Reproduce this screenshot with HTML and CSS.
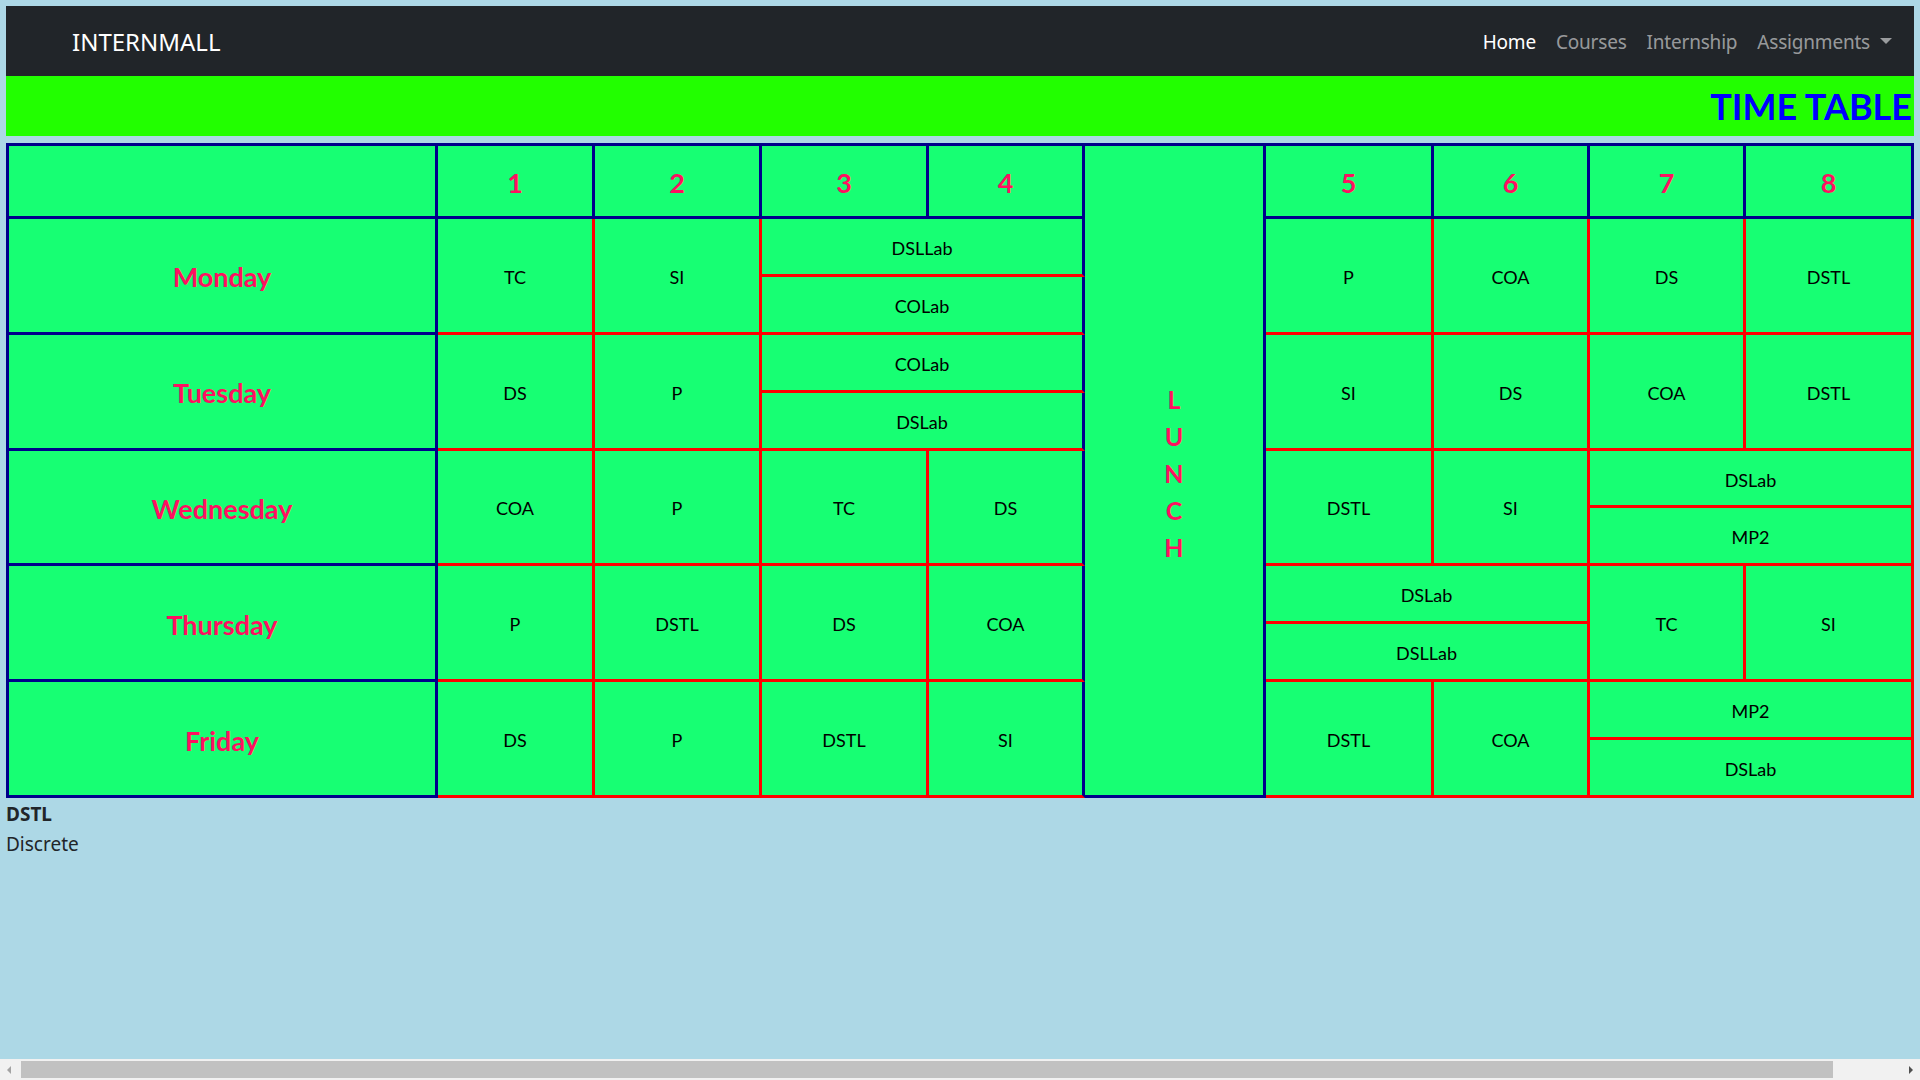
FILE: index.html
```html
<!DOCTYPE html>
<html lang="en">
<head>
<meta charset="utf-8">
<title>INTERNMALL - Time Table</title>
<link rel="stylesheet" href="styles.css">
</head>
<body>
<div class="page">
  <nav class="navbar">
    <a class="brand" href="#">INTERNMALL</a>
    <ul class="nav-links">
      <li><a class="nav-link active" href="#">Home</a></li>
      <li><a class="nav-link" href="#">Courses</a></li>
      <li><a class="nav-link" href="#">Internship</a></li>
      <li><a class="nav-link dropdown" href="#">Assignments<span class="caret"></span></a></li>
    </ul>
  </nav>

  <header class="title-bar">
    <h2 class="title">TIME TABLE</h2>
  </header>

  <div class="timetable">
    <!-- header row -->
    <div class="cell head"></div>
    <div class="cell head num">1</div>
    <div class="cell head num">2</div>
    <div class="cell head num">3</div>
    <div class="cell head num">4</div>
    <div class="cell lunch">L<br>U<br>N<br>C<br>H</div>
    <div class="cell head num">5</div>
    <div class="cell head num">6</div>
    <div class="cell head num">7</div>
    <div class="cell head num">8</div>

    <!-- Monday -->
    <div class="cell day tall">Monday</div>
    <div class="cell tall">TC</div>
    <div class="cell tall">SI</div>
    <div class="cell wide pre-lunch">DSLLab</div>
    <div class="cell tall">P</div>
    <div class="cell tall">COA</div>
    <div class="cell tall">DS</div>
    <div class="cell tall">DSTL</div>
    <div class="cell wide pre-lunch">COLab</div>

    <!-- Tuesday -->
    <div class="cell day tall">Tuesday</div>
    <div class="cell tall">DS</div>
    <div class="cell tall">P</div>
    <div class="cell wide pre-lunch">COLab</div>
    <div class="cell tall">SI</div>
    <div class="cell tall">DS</div>
    <div class="cell tall">COA</div>
    <div class="cell tall">DSTL</div>
    <div class="cell wide pre-lunch">DSLab</div>

    <!-- Wednesday -->
    <div class="cell day tall">Wednesday</div>
    <div class="cell tall">COA</div>
    <div class="cell tall">P</div>
    <div class="cell tall">TC</div>
    <div class="cell tall pre-lunch">DS</div>
    <div class="cell tall">DSTL</div>
    <div class="cell tall">SI</div>
    <div class="cell wide">DSLab</div>
    <div class="cell wide">MP2</div>

    <!-- Thursday -->
    <div class="cell day tall">Thursday</div>
    <div class="cell tall">P</div>
    <div class="cell tall">DSTL</div>
    <div class="cell tall">DS</div>
    <div class="cell tall pre-lunch">COA</div>
    <div class="cell wide">DSLab</div>
    <div class="cell tall">TC</div>
    <div class="cell tall">SI</div>
    <div class="cell wide">DSLLab</div>

    <!-- Friday -->
    <div class="cell day tall">Friday</div>
    <div class="cell tall">DS</div>
    <div class="cell tall">P</div>
    <div class="cell tall">DSTL</div>
    <div class="cell tall pre-lunch">SI</div>
    <div class="cell tall">DSTL</div>
    <div class="cell tall">COA</div>
    <div class="cell wide">MP2</div>
    <div class="cell wide">DSLab</div>
  </div>

  <div class="info">
    <p class="info-title">DSTL</p>
    <p class="info-text">Discrete</p>
  </div>
</div>

<div class="hscroll" aria-hidden="true">
  <span class="hscroll-arrow left"></span>
  <div class="hscroll-track"><div class="hscroll-thumb"></div></div>
  <span class="hscroll-arrow right"></span>
</div>
</body>
</html>
```

FILE: styles.css
```css
html, body {
  margin: 0;
  padding: 0;
}

body {
  background: #add8e6;
  font-family: "Noto Sans", "Open Sans", sans-serif;
  color: #212529;
}

.page {
  padding: 6px 6px 0 6px;
}

/* ---------- navbar ---------- */
.navbar {
  height: 70px;
  background: #212529;
  display: flex;
  align-items: center;
  padding: 0 12px 0 66px;
}

.brand {
  color: #fff;
  text-decoration: none;
  font-size: 24px;
  line-height: 1;
  margin-top: 2px;
}

.nav-links {
  list-style: none;
  margin: 0 0 0 auto;
  padding: 0;
  display: flex;
  align-items: center;
  margin-top: 2px;
}

.nav-link {
  display: flex;
  align-items: center;
  padding: 0 10px;
  font-size: 19px;
  letter-spacing: -0.2px;
  line-height: 30px;
  color: rgba(255, 255, 255, 0.55);
  text-decoration: none;
}

.nav-link.active {
  color: #fff;
}

.caret {
  display: inline-block;
  margin-left: 10px;
  margin-top: -3px;
  width: 0;
  height: 0;
  border-top: 6px solid rgba(255, 255, 255, 0.55);
  border-left: 6px solid transparent;
  border-right: 6px solid transparent;
}

/* ---------- title bar ---------- */
.title-bar {
  height: 60px;
  background: #22ff00;
  display: flex;
  align-items: center;
  justify-content: flex-end;
  padding-right: 2px;
}

.title {
  margin: 0;
  font-family: "Lato", "Noto Sans", sans-serif;
  font-weight: 700;
  font-size: 36px;
  line-height: 1;
  color: #0000ff;
}

/* ---------- timetable ---------- */
.timetable {
  margin-top: 7px;
  display: grid;
  grid-template-columns: 429px 157px 167px 167px 156px 181px 168px 156px 156px 168px;
  grid-template-rows: 73px repeat(10, 57.9px);
  background: #17ff73;
  border-top: 3px solid #00008b;
  border-left: 3px solid #00008b;
  font-family: "Lato", "Noto Sans", sans-serif;
}

.cell {
  display: flex;
  align-items: center;
  justify-content: center;
  text-align: center;
  font-size: 18px;
  color: #000;
  padding-top: 3px;
  border-right: 3px solid #ff0000;
  border-bottom: 3px solid #ff0000;
}

.tall {
  grid-row: span 2;
}

.wide {
  grid-column: span 2;
}

.head {
  border-color: #00008b;
}

.num,
.day,
.lunch {
  font-weight: 700;
  font-size: 27px;
  color: #ff1060;
}

.day {
  border-color: #00008b;
}

.pre-lunch {
  border-right-color: #00008b;
}

.lunch {
  grid-column: 6;
  grid-row: 1 / -1;
  border-color: #00008b;
  line-height: 37px;
  font-size: 25px;
  padding-top: 7px;
}

/* ---------- info ---------- */
.info {
  font-size: 19px;
  line-height: 30px;
  padding-top: 1px;
}

.info p {
  margin: 0;
}

.info-title {
  font-weight: 700;
}

/* ---------- horizontal scrollbar (window chrome) ---------- */
.hscroll {
  position: fixed;
  left: 0;
  right: 0;
  bottom: 0;
  height: 21px;
  background: #f1f1f1;
  display: flex;
  align-items: center;
}

.hscroll-track {
  flex: 1;
  height: 100%;
  display: flex;
  align-items: center;
  padding: 0 3px;
}

.hscroll-thumb {
  width: 1812px;
  height: 17px;
  background: #c1c1c1;
}

.hscroll-arrow {
  width: 18px;
  height: 21px;
  display: flex;
  align-items: center;
  justify-content: center;
}

.hscroll-arrow::before {
  content: "";
  width: 0;
  height: 0;
  border-top: 4px solid transparent;
  border-bottom: 4px solid transparent;
}

.hscroll-arrow.left::before {
  border-right: 4px solid #a3a3a3;
}

.hscroll-arrow.right::before {
  border-left: 4px solid #505050;
}
```
